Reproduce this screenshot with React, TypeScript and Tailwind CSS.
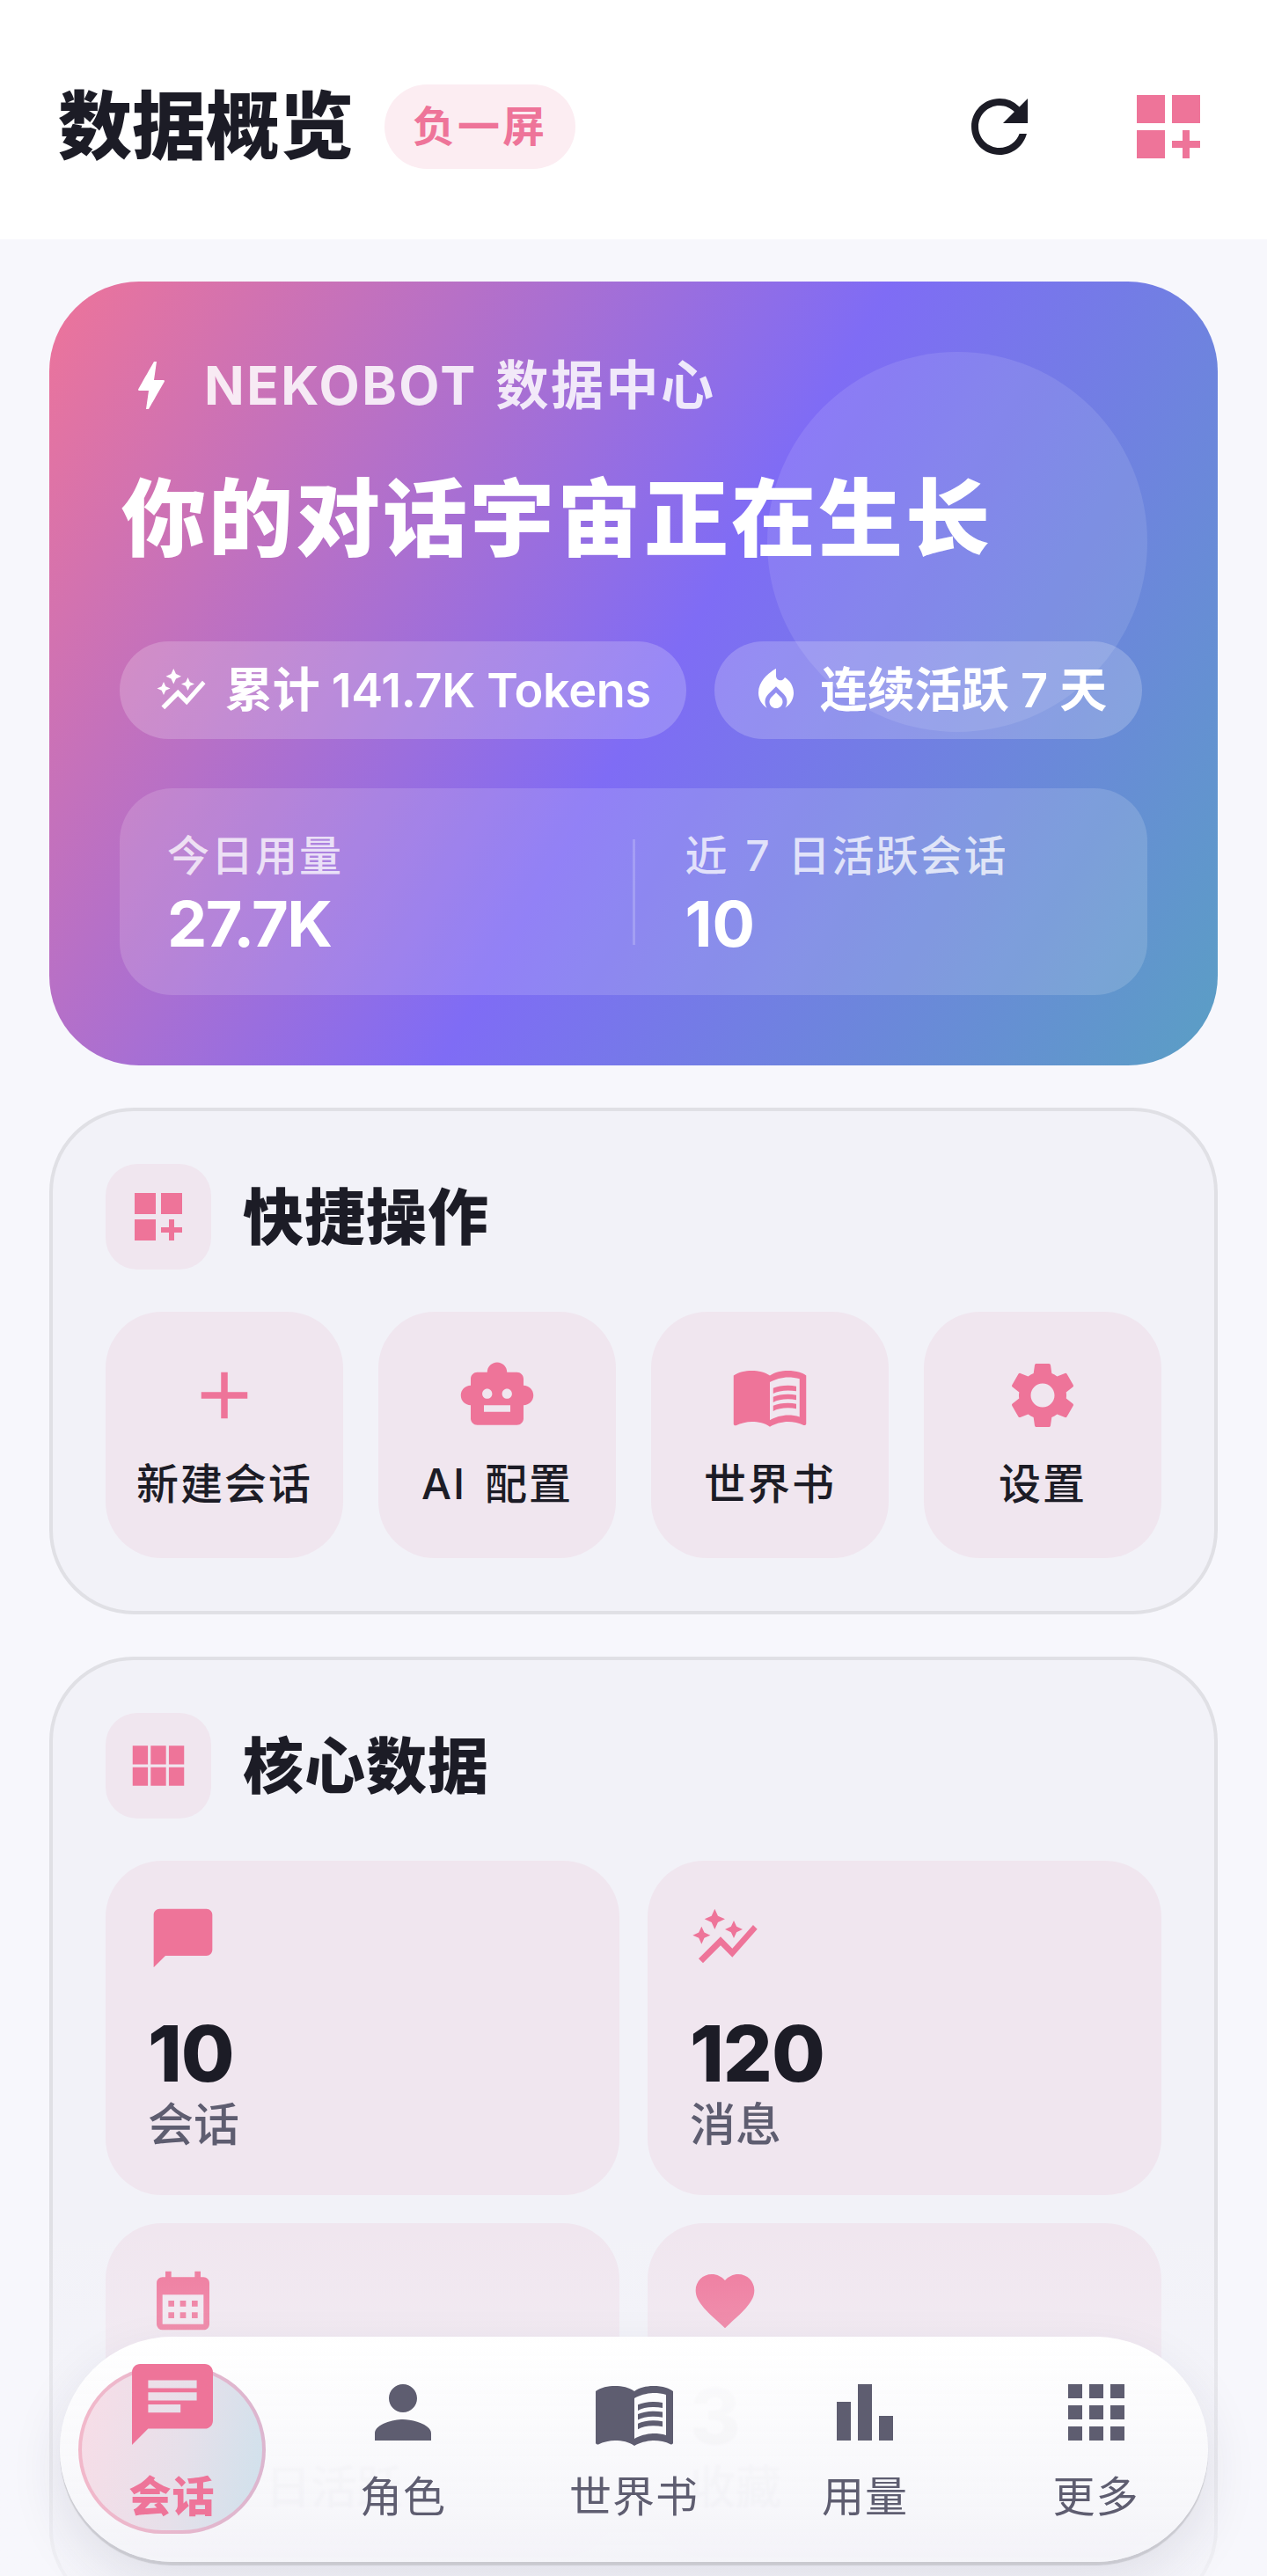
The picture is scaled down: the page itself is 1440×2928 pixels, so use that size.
import type { ReactNode } from 'react'
import {
  MdAdd,
  MdApps,
  MdAutoGraph,
  MdBarChart,
  MdBolt,
  MdCalendarMonth,
  MdChat,
  MdChatBubble,
  MdDashboardCustomize,
  MdFavorite,
  MdLocalFireDepartment,
  MdMenuBook,
  MdPerson,
  MdRefresh,
  MdSettings,
  MdSmartToy,
  MdViewModule,
} from 'react-icons/md'

const quickActions = [
  { label: '新建会话', icon: <MdAdd size={90} /> },
  { label: 'AI 配置', icon: <MdSmartToy size={90} /> },
  { label: '世界书', icon: <MdMenuBook size={90} /> },
  { label: '设置', icon: <MdSettings size={90} /> },
]

const coreStats = [
  { value: '10', label: '会话', icon: <MdChatBubble size={80} /> },
  { value: '120', label: '消息', icon: <MdAutoGraph size={80} /> },
  { value: '10', label: '近 7 日活跃', icon: <MdCalendarMonth size={80} /> },
  { value: '3', label: '收藏', icon: <MdFavorite size={80} /> },
]

const navItems = [
  { label: '角色', icon: <MdPerson size={96} /> },
  { label: '世界书', icon: <MdMenuBook size={96} /> },
  { label: '用量', icon: <MdBarChart size={96} /> },
  { label: '更多', icon: <MdApps size={96} /> },
]

function Pill({ icon, children }: { icon: ReactNode; children: ReactNode }) {
  return (
    <div className="flex h-[111px] items-center gap-5 rounded-full bg-white/20 px-10 text-[54px] leading-none font-semibold tracking-[-0.3px] whitespace-nowrap text-white">
      {icon}
      <span>{children}</span>
    </div>
  )
}

function Section({ title, icon, children }: { title: string; icon: ReactNode; children: ReactNode }) {
  return (
    <section className="rounded-[96px] border-[4px] border-[#e0e0e5] bg-[#f2f2f8] px-[60px] pt-[60px] pb-[60px]">
      <div className="flex items-center gap-9">
        <div className="flex size-[120px] items-center justify-center rounded-[36px] bg-[#f0e6ef] text-[#ee7499]">
          {icon}
        </div>
        <h2 className="pt-0.5 text-[69px] leading-none font-black tracking-[1px] text-[#1c1c26]">{title}</h2>
      </div>
      {children}
    </section>
  )
}

export default function App() {
  return (
    <div className="relative h-[2928px] overflow-hidden bg-[#f7f7fc] font-['Inter','Noto_Sans_CJK_SC',sans-serif]">
      <header className="flex h-[272px] items-center justify-between bg-white pt-4 pr-[64px] pl-[66px]">
        <div className="flex items-center gap-[35px]">
          <h1 className="text-[84px] leading-none font-black text-[#1c1c26]">数据概览</h1>
          <span className="flex h-24 items-center rounded-full bg-[#fcedf2] px-8 text-[48px] font-bold tracking-[3px] text-[#ee7499]">
            负一屏
          </span>
        </div>
        <div className="flex items-center gap-24 text-[#1c1c26]">
          <MdRefresh size={96} />
          <MdDashboardCustomize size={96} className="text-[#ee7499]" />
        </div>
      </header>

      <main className="flex flex-col gap-12 px-14 pt-12">
        {/* hero */}
        <section className="relative h-[891px] overflow-hidden rounded-[102px] bg-[linear-gradient(120deg,#ee7499_0%,#7f6cf5_52%,#5a9fc4_100%)] px-20 pt-[82px] text-white">
          <div className="absolute top-20 right-20 size-[432px] rounded-full bg-white/10" />
          <div className="relative">
            <div className="flex h-[72px] items-center gap-6">
              <MdBolt size={72} />
              <span className="text-[60px] font-bold tracking-[2.5px] [word-spacing:4px] text-white/85">NEKOBOT 数据中心</span>
            </div>
            <h2 className="mt-[50px] pl-0.5 text-[96px] leading-[130px] font-black tracking-[3px]">你的对话宇宙正在生长</h2>
            <div className="mt-[75px] flex gap-8">
              <Pill icon={<MdAutoGraph size={60} />}>累计 141.7K Tokens</Pill>
              <Pill icon={<MdLocalFireDepartment size={60} />}>连续活跃 7 天</Pill>
            </div>
            <div className="mt-14 flex h-[235px] w-[1168px] items-center gap-[57px] rounded-[60px] bg-white/15 px-[54px]">
              <div className="flex-1">
                <div className="mt-1 text-[48px] leading-[60px] font-medium tracking-[2px] [word-spacing:4px] text-white/75">今日用量</div>
                <div className="mt-2 text-[72px] leading-[78px] font-bold tracking-[-1.5px]">27.7K</div>
              </div>
              <div className="h-[120px] w-[3px] bg-white/20" />
              <div className="flex-1">
                <div className="mt-1 text-[48px] leading-[60px] font-medium tracking-[2px] [word-spacing:4px] text-white/75">近 7 日活跃会话</div>
                <div className="mt-2 text-[72px] leading-[78px] font-bold">10</div>
              </div>
            </div>
          </div>
        </section>

        <Section title="快捷操作" icon={<MdDashboardCustomize size={72} />}>
          <div className="mt-12 grid grid-cols-4 gap-10">
            {quickActions.map((action) => (
              <div
                key={action.label}
                className="flex h-[280px] flex-col items-center rounded-[64px] bg-[#f0e6ef] pt-[50px]"
              >
                <span className="text-[#ee7499]">{action.icon}</span>
                <span className="mt-5 text-[48px] leading-[72px] font-medium tracking-[2px] [word-spacing:6px] text-[#1c1c26]">
                  {action.label}
                </span>
              </div>
            ))}
          </div>
        </Section>

        <Section title="核心数据" icon={<MdViewModule size={78} />}>
          <div className="mt-12 grid grid-cols-2 gap-8">
            {coreStats.map((stat) => (
              <div key={stat.label} className="h-[380px] rounded-[64px] bg-[#f0e6ef] px-12 pt-12">
                <span className="block text-[#ee7499]">{stat.icon}</span>
                <div className="mt-[43px] text-[88px] leading-[96px] font-extrabold tracking-[-1px] text-[#1c1c26]">{stat.value}</div>
                <div className="text-[52px] leading-[68px] font-medium [word-spacing:12px] text-[#5e5d70]">{stat.label}</div>
              </div>
            ))}
          </div>
        </Section>
      </main>

      {/* fade under the floating tab bar */}
      <div className="absolute inset-x-0 bottom-0 h-[400px] bg-gradient-to-b from-[#f7f7fc]/0 to-[#f7f7fc]/70" />

      <nav className="absolute bottom-4 left-[68px] flex h-64 w-[1305px] items-center justify-between rounded-full bg-gradient-to-b from-white to-[#f3f3f8]/93 px-[21px] shadow-[0_4px_1px_rgba(0,0,0,0.12),0_24px_60px_rgba(40,40,70,0.1)] backdrop-blur-[1px]">
        <div className="h-[191px] w-[213px] rounded-[96px] bg-[linear-gradient(90deg,#f2b8ca,#dcb6cf)] p-[4px]">
          <div className="flex h-full flex-col items-center justify-center gap-3 rounded-[92px] bg-[linear-gradient(100deg,#f8dde7,#e6e0ea_55%,#cfe1ec)] text-[#ee7499]">
            <MdChat size={96} className="-translate-y-[9px] scale-[1.15]" />
            <span className="text-[48px] leading-[72px] font-black tracking-[1px]">会话</span>
          </div>
        </div>
        {navItems.map((item) => (
          <div key={item.label} className="flex h-[191px] w-[213px] flex-col items-center justify-center gap-3 text-[#5e5d70]">
            {item.icon}
            <span className="text-[48px] leading-[72px] tracking-[1px] whitespace-nowrap">{item.label}</span>
          </div>
        ))}
      </nav>
    </div>
  )
}
